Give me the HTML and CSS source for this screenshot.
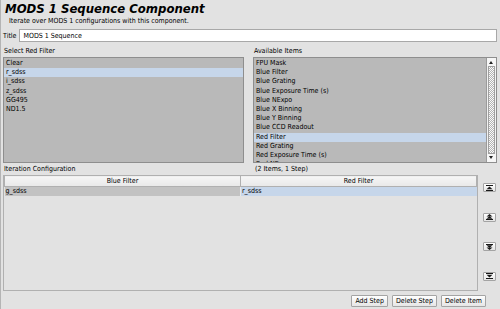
FILE: index.html
```html
<!DOCTYPE html>
<html lang="en">

<head>
    <meta charset="UTF-8">
    <title>MODS 1 Sequence Component</title>
    <link rel="stylesheet" href="styles.css">
</head>

<body>
    <div class="panel">
        <header class="comp-header">
            <h1>MODS 1 Sequence Component</h1>
            <p>Iterate over MODS 1 configurations with this component.</p>
        </header>

        <div class="title-row">
            <label for="title">Title</label>
            <input type="text" id="title" value="MODS 1 Sequence">
        </div>

        <div class="pickers">
            <section class="picker">
                <div class="caption">Select Red Filter</div>
                <ul class="list">
                    <li>Clear</li>
                    <li class="selected">r_sdss</li>
                    <li>i_sdss</li>
                    <li>z_sdss</li>
                    <li>GG495</li>
                    <li>ND1.5</li>
                </ul>
            </section>

            <section class="picker">
                <div class="caption">Available Items</div>
                <div class="list-wrap">
                    <ul class="list">
                        <li>FPU Mask</li>
                        <li>Blue Filter</li>
                        <li>Blue Grating</li>
                        <li>Blue Exposure Time (s)</li>
                        <li>Blue NExpo</li>
                        <li>Blue X Binning</li>
                        <li>Blue Y Binning</li>
                        <li>Blue CCD Readout</li>
                        <li class="selected">Red Filter</li>
                        <li>Red Grating</li>
                        <li>Red Exposure Time (s)</li>
                        <li>Red NExpo</li>
                    </ul>
                    <div class="scrollbar">
                        <span class="arrow up"></span>
                        <span class="track"></span>
                        <span class="arrow down"></span>
                    </div>
                </div>
            </section>
        </div>

        <div class="iter-captions">
            <div class="caption">Iteration Configuration</div>
            <div class="caption">(2 Items, 1 Step)</div>
        </div>

        <div class="iter-body">
            <div class="table-box">
                <table class="iter-table">
                    <thead>
                        <tr>
                            <th>Blue Filter</th>
                            <th>Red Filter</th>
                        </tr>
                    </thead>
                    <tbody>
                        <tr>
                            <td class="cell-grey">g_sdss</td>
                            <td class="cell-sel">r_sdss</td>
                        </tr>
                    </tbody>
                </table>
            </div>

            <div class="move-buttons">
                <button class="mv" title="Top">
                    <svg width="7" height="6" viewBox="0 0 7 6"><rect x="0" y="0" width="7" height="1"/><path d="M3.5 1.5 L6.5 4.2 H0.5 Z"/><rect x="0" y="5" width="7" height="1"/></svg>
                </button>
                <button class="mv" title="Up">
                    <svg width="7" height="6" viewBox="0 0 7 6"><path d="M3.5 0 L6.5 2.6 H0.5 Z"/><path d="M3.5 2 L6.5 4.8 H0.5 Z"/><rect x="0" y="5" width="7" height="1"/></svg>
                </button>
                <button class="mv" title="Down">
                    <svg width="7" height="6" viewBox="0 0 7 6"><rect x="0" y="0" width="7" height="1"/><path d="M0.5 1.2 H6.5 L3.5 4 Z"/><path d="M0.5 3.4 H6.5 L3.5 6 Z"/></svg>
                </button>
                <button class="mv" title="Bottom">
                    <svg width="7" height="6" viewBox="0 0 7 6"><rect x="0" y="0" width="7" height="1"/><path d="M0.5 1.8 H6.5 L3.5 4.5 Z"/><rect x="0" y="5" width="7" height="1"/></svg>
                </button>
            </div>
        </div>

        <div class="actions">
            <button class="btn">Add Step</button>
            <button class="btn">Delete Step</button>
            <button class="btn">Delete Item</button>
        </div>
    </div>
</body>

</html>
```

FILE: styles.css
```css
/* Panel base */
body {
    margin: 0;
    background-color: #e2e2e2;
    font-family: "DejaVu Sans Condensed", "DejaVu Sans", sans-serif;
    font-size: 7px;
    color: #000;
}

.panel {
    width: 500px;
    height: 309px;
    box-sizing: border-box;
    border-left: 1px solid #b4b4b4;
}

/* Header */
.comp-header {
    padding: 1px 4px 0;
    height: 27px;
    box-sizing: border-box;
}

.comp-header h1 {
    margin: 0;
    font-size: 13px;
    font-style: italic;
    font-weight: bold;
    line-height: 15px;
}

.comp-header p {
    margin: 1px 0 0 4px;
    font-size: 7px;
    line-height: 9px;
}

/* Title field */
.title-row {
    display: flex;
    align-items: center;
    gap: 3px;
    padding: 2px 3px 0 2px;
}

.title-row input {
    flex: 1;
    height: 13px;
    box-sizing: border-box;
    padding: 0 3px;
    border: 1px solid #a8a8a8;
    background: #fff;
    font-family: inherit;
    font-size: 7px;
    color: #000;
}

/* Filter / item lists */
.pickers {
    display: grid;
    grid-template-columns: 241px 244px;
    column-gap: 9px;
    padding: 4px 2px 0 2px;
}

.caption {
    height: 11px;
    line-height: 11px;
    padding-left: 1px;
}

.list {
    margin: 0;
    padding: 1px 0 0;
    list-style: none;
    height: 106px;
    box-sizing: border-box;
    background-color: #b9b9b9;
    border: 1px solid #8e8e8e;
    overflow: hidden;
}

.list li {
    height: 9.2px;
    line-height: 9.2px;
    padding-left: 2px;
    white-space: nowrap;
}

.list li.selected {
    background-color: #c6d6ea;
}

.list-wrap {
    display: flex;
    height: 106px;
    border: 1px solid #8e8e8e;
    box-sizing: border-box;
}

.list-wrap .list {
    flex: 1;
    border: none;
    height: 104px;
}

.scrollbar {
    width: 9px;
    display: flex;
    flex-direction: column;
    background: #f2f2f2;
    border-left: 1px solid #9a9a9a;
}

.scrollbar .arrow {
    height: 8px;
    position: relative;
    background: #f6f6f6;
}

.scrollbar .arrow::after {
    content: "";
    position: absolute;
    left: 2px;
    top: 3px;
    border-left: 2.5px solid transparent;
    border-right: 2.5px solid transparent;
}

.scrollbar .up::after {
    border-bottom: 3px solid #222;
}

.scrollbar .down::after {
    border-top: 3px solid #222;
    top: 2px;
}

.scrollbar .track {
    flex: 1;
    margin: 0 1px;
    border: 1px solid #a0a0a0;
    background-color: #fafafa;
    background-image: repeating-conic-gradient(#b4b4b4 0 25%, #fafafa 0 50%);
    background-size: 2px 2px;
}

/* Iteration table */
.iter-captions {
    display: grid;
    grid-template-columns: 251px 1fr;
    padding: 1px 2px 0 2px;
}

.iter-body {
    display: flex;
    gap: 5px;
    padding: 0 3px 0 2px;
}

.table-box {
    width: 475px;
    height: 116px;
    box-sizing: border-box;
    border: 1px solid #b0b0b0;
    border-top: none;
}

.iter-table {
    width: 100%;
    border-collapse: collapse;
    table-layout: fixed;
}

.iter-table th {
    height: 10px;
    padding: 0;
    font-weight: normal;
    text-align: center;
    background: linear-gradient(#f6f6f6, #e8e8e8);
    border: 1px solid #b0b0b0;
}

.iter-table td {
    height: 9px;
    line-height: 9px;
    padding: 0 1px;
}

.iter-table .cell-grey {
    background-color: #c2c2c2;
}

.iter-table .cell-sel {
    background-color: #c6d6ea;
    border-left: 1px solid #e8e8e8;
}

.move-buttons {
    display: flex;
    flex-direction: column;
    padding-top: 8px;
    gap: 20.5px;
}

.mv {
    width: 13px;
    height: 9px;
    padding: 0;
    display: flex;
    align-items: center;
    justify-content: center;
    background: linear-gradient(#ffffff, #e4e4e4);
    border: 1px solid #a4a4a4;
    border-radius: 1px;
}

.mv svg {
    fill: #1a1a1a;
}

/* Bottom buttons */
.actions {
    display: flex;
    justify-content: flex-end;
    gap: 4px;
    padding: 4px 14px 0 0;
}

.btn {
    height: 12px;
    padding: 0 3px;
    font-family: inherit;
    font-size: 7px;
    color: #000;
    background: linear-gradient(#ffffff, #e6e6e6);
    border: 1px solid #a4a4a4;
    border-radius: 1px;
}
```
